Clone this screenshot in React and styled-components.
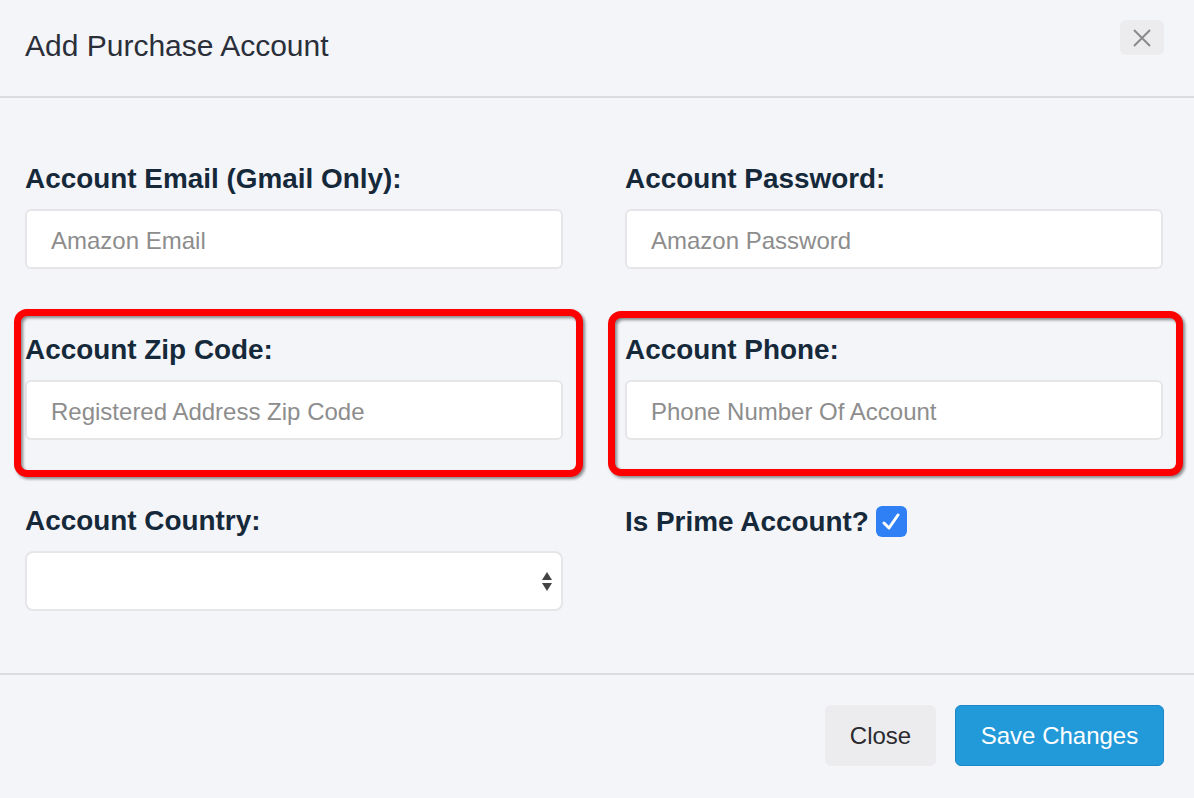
import React from "react";
import styled, { createGlobalStyle } from "styled-components";

const Global = createGlobalStyle`
  html, body { margin: 0; padding: 0; background: #f4f5f9; }
  body { font-family: "Liberation Sans", Arial, sans-serif; }
  * { box-sizing: border-box; }
`;

const Modal = styled.div`
  width: 1194px;
  height: 798px;
  background: #f4f5f9;
  display: flex;
  flex-direction: column;
  overflow: hidden;
`;

const Header = styled.div`
  height: 98px;
  flex-shrink: 0;
  border-bottom: 2px solid #dcdcdf;
  display: flex;
  align-items: flex-start;
  justify-content: space-between;
  padding: 26px 30px 0 25px;
`;

const Title = styled.h4`
  margin: 0;
  font-size: 30px;
  font-weight: 400;
  color: #2a2f3a;
  line-height: 40px;
`;

const CloseX = styled.button`
  width: 44px;
  height: 35px;
  margin-top: -6px;
  border: none;
  border-radius: 6px;
  background: #ececef;
  display: flex;
  align-items: center;
  justify-content: center;
  padding: 0;
`;

const Body = styled.div`
  flex: 1;
  padding: 66px 31px 0 25px;
  display: grid;
  grid-template-columns: 538px 538px;
  column-gap: 62px;
  row-gap: 66px;
  align-content: start;
`;

const Field = styled.div`
  position: relative;
  display: flex;
  flex-direction: column;
`;

const Label = styled.label`
  font-size: 27.9px;
  font-weight: 700;
  color: #15293a;
  line-height: 30px;
  margin-bottom: 15px;
  display: flex;
  align-items: center;
`;

const Input = styled.input`
  display: block;
  width: 100%;
  height: 60px;
  flex-shrink: 0;
  background: #fff;
  border: 2px solid #e6e6e9;
  border-radius: 6px;
  padding: 4px 24px 0;
  font-family: "Liberation Sans", Arial, sans-serif;
  font-size: 24px;
  color: #333;
  outline: none;
  &::placeholder { color: #8d8d8d; }
`;

const SelectBox = styled.div`
  position: relative;
  height: 60px;
  flex-shrink: 0;
  background: #fff;
  border: 2px solid #e6e6e9;
  border-radius: 8px;
`;

const Arrows = styled.svg`
  position: absolute;
  right: 8px;
  top: 18px;
`;

const Check = styled.span`
  display: inline-flex;
  width: 31px;
  height: 31px;
  margin-left: 7px;
  border-radius: 6px;
  background: #2f80f5;
  align-items: center;
  justify-content: center;
`;

const Highlight = styled.div`
  position: absolute;
  top: ${(p) => p.$t}px;
  left: ${(p) => p.$l}px;
  right: ${(p) => p.$r}px;
  bottom: ${(p) => p.$b}px;
  border: 7px solid #ff0000;
  border-radius: 13px;
  filter: drop-shadow(2px 2px 1.5px rgba(0, 0, 0, 0.45));
  pointer-events: none;
`;

const Footer = styled.div`
  height: 125px;
  flex-shrink: 0;
  border-top: 2px solid #dcdcdf;
  display: flex;
  justify-content: flex-end;
  align-items: flex-start;
  padding: 30px 30px 0 0;
  gap: 19px;
`;

const Button = styled.button`
  height: 61px;
  padding: 0;
  white-space: nowrap;
  border-radius: 6px;
  border: 1px solid ${(p) => (p.$primary ? "#1b87c9" : "#ececee")};
  background: ${(p) => (p.$primary ? "#229ada" : "#ececee")};
  color: ${(p) => (p.$primary ? "#fff" : "#2a2a2e")};
  font-family: "Liberation Sans", Arial, sans-serif;
  font-size: 24px;
  width: ${(p) => p.$w}px;
`;

export default function App() {
  return (
    <>
      <Global />
      <Modal>
        <Header>
          <Title>Add Purchase Account</Title>
          <CloseX aria-label="Close">
            <svg width="20" height="20" viewBox="0 0 20 20">
              <path d="M2 2 L18 18 M18 2 L2 18" stroke="#8a8a8d" strokeWidth="2" fill="none" />
            </svg>
          </CloseX>
        </Header>
        <Body>
          <Field>
            <Label>Account Email (Gmail Only):</Label>
            <Input placeholder="Amazon Email" />
          </Field>
          <Field>
            <Label>Account Password:</Label>
            <Input type="password" placeholder="Amazon Password" />
          </Field>
          <Field>
            <Label>Account Zip Code:</Label>
            <Input placeholder="Registered Address Zip Code" />
            <Highlight $t={-26} $l={-11} $r={-20} $b={-37} />
          </Field>
          <Field>
            <Label>Account Phone:</Label>
            <Input placeholder="Phone Number Of Account" />
            <Highlight $t={-24} $l={-17} $r={-20} $b={-36} />
          </Field>
          <Field>
            <Label>Account Country:</Label>
            <SelectBox>
              <Arrows width="12" height="22" viewBox="0 0 12 22">
                <path d="M6 1 L11 9 L1 9 Z M1 12 L11 12 L6 20 Z" fill="#444" />
              </Arrows>
            </SelectBox>
          </Field>
          <Field>
            <Label>
              Is Prime Account?
              <Check>
                <svg width="20" height="18" viewBox="0 0 20 18">
                  <path d="M3 10 L8 15 L17 2" stroke="#fff" strokeWidth="3" fill="none" strokeLinecap="round" strokeLinejoin="round" />
                </svg>
              </Check>
            </Label>
          </Field>
        </Body>
        <Footer>
          <Button $w={111}>Close</Button>
          <Button $primary $w={209}>Save Changes</Button>
        </Footer>
      </Modal>
    </>
  );
}
